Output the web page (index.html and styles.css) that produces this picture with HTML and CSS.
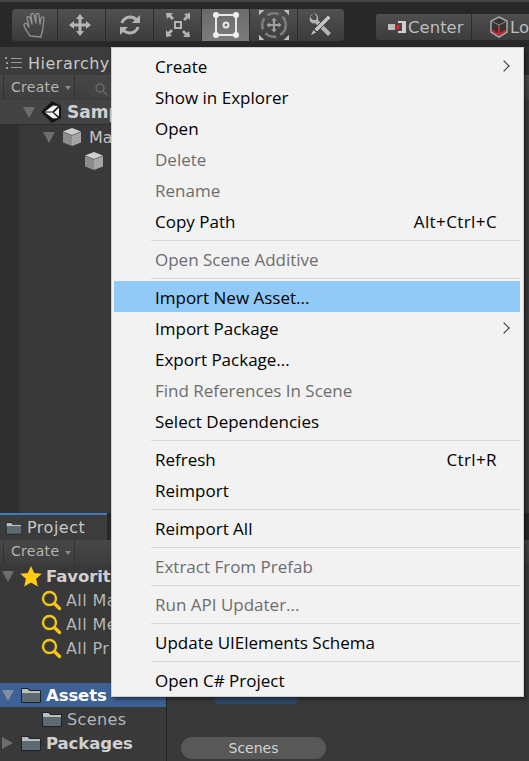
FILE: index.html
```html
<!DOCTYPE html>
<html lang="en">
<head>
  <meta charset="UTF-8" />
  <title>Unity Editor - Project context menu</title>
  <link rel="stylesheet" href="styles.css">
</head>
<body>
  <svg class="defs" width="0" height="0">
    <defs>
      <symbol id="folder" viewBox="0 0 22 18">
        <path d="M1 16V3q0-1 1-1h6l2 2h10q1 0 1 1v11q0 1-1 1H2q-1 0-1-1z" fill="#1d2226"/>
        <path d="M2 7h18v9H2z" fill="#5d6a72"/>
        <path d="M2 3h5.500l2 2H20v2H2z" fill="#b9bdbf"/>
      </symbol>
      <symbol id="search" viewBox="0 0 21 21">
        <circle cx="8.500" cy="8.500" r="6.500" fill="none" stroke="#f5c518" stroke-width="2.400"/>
        <path d="M13.500 13.500l5 5" stroke="#f5c518" stroke-width="3.400" stroke-linecap="round"/>
      </symbol>
      <symbol id="cube" viewBox="0 0 20 20">
        <path d="M10 1l9 3.500L10 8 1 4.500z" fill="#cfcfcf"/>
        <path d="M1 5l9 3.500V19l-9-3.500z" fill="#8c8c8c"/>
        <path d="M19 5l-9 3.500V19l9-3.500z" fill="#a5a5a5"/>
      </symbol>
    </defs>
  </svg>

  <header class="toolbar">
    <div class="tools">
      <button class="tool tool-end">
        <svg width="26" height="28" viewBox="0 0 26 28" fill="none" stroke="#8e8e8e" stroke-width="1.400" stroke-linejoin="round" stroke-linecap="round">
          <path d="M8 25C6 21 2 17 2 14c0-2 2-2 3-1l2 3L5 7c0-2 2-2 3 0l2 6-1-9c0-2 3-2 3 0l2 8 0-8c0-2 3-2 3 0l1 9 1-6c1-2 3-1 3 0l-1 9c0 4-2 7-2 10z"/>
        </svg>
      </button>
      <button class="tool">
        <svg class="move-icon" width="24" height="24" viewBox="0 0 24 24" fill="#b4b4b4">
          <path d="M12 1l4 5h-2.500v4.500H18V8l5 4-5 4v-2.500h-4.500V18H16l-4 5-4-5h2.500v-4.500H6V16l-5-4 5-4v2.500h4.500V6H8z"/>
        </svg>
      </button>
      <button class="tool">
        <svg width="24" height="24" viewBox="0 0 24 24" fill="none" stroke="#b4b4b4" stroke-width="3">
          <path d="M4 10c1-4 5-6 8-6 3 0 5 1 7 3"/>
          <path d="M20 14c-1 4-5 6-8 6-3 0-5-1-7-3"/>
          <path d="M22 2v8h-8z" fill="#b4b4b4" stroke="none"/>
          <path d="M2 22v-8h8z" fill="#b4b4b4" stroke="none"/>
        </svg>
      </button>
      <button class="tool">
        <svg width="26" height="26" viewBox="0 0 26 26" fill="#b4b4b4">
          <path d="M9 9h8v8H9zm2 2v4h4v-4z" fill-rule="evenodd"/>
          <path d="M1 1h7L6 3l3 3-2 2-3-3-2 2zM25 1v7l-2-2-3 3-2-2 3-3-2-2zM1 25v-7l2 2 3-3 2 2-3 3 2 2zM25 25h-7l2-2-3-3 2-2 3 3 2-2z"/>
        </svg>
      </button>
      <button class="tool tool-on">
        <svg width="30" height="30" viewBox="0 0 30 30">
          <path d="M5 5h20v20H5z" fill="none" stroke="#e8e8e8" stroke-width="2"/>
          <circle cx="5" cy="5" r="3" fill="#f0f0f0"/>
          <circle cx="25" cy="5" r="3" fill="#f0f0f0"/>
          <circle cx="5" cy="25" r="3" fill="#f0f0f0"/>
          <circle cx="25" cy="25" r="3" fill="#f0f0f0"/>
          <circle cx="15" cy="15" r="2.500" fill="none" stroke="#e8e8e8" stroke-width="2"/>
        </svg>
      </button>
      <button class="tool">
        <svg width="30" height="30" viewBox="0 0 28 28" fill="none">
          <path d="M0 0h5L0 5zM28 0v5l-5-5zM0 28v-5l5 5zM28 28h-5l5-5z" fill="#bdbdbd"/>
          <circle cx="14" cy="14" r="11" stroke="#7c7c7c" stroke-width="2.500" stroke-dasharray="11 4"/>
          <path d="M14 7l2.500 3h-1.500v3h3v-1.500l3 2.500-3 2.500V15h-3v3h1.500L14 21l-2.500-3H13v-3h-3v1.500L7 14l3-2.500V13h3v-3h-1.500z" fill="#a0a0a0"/>
        </svg>
      </button>
      <button class="tool tool-end">
        <svg width="24" height="24" viewBox="0 0 24 24">
          <path d="M4 1C1 2 0 5 1 8c1 2 3 3 5 2l13 13 3-3L9 7c1-3-1-6-4-7l3 4-1 3-3 0-3-3z" fill="#b4b4b4"/>
          <path d="M19 2l3 3L8 19l-3-3z" fill="#c4c4c4" stroke="#454545" stroke-width="1"/>
          <path d="M4.500 17l2.500 2.500L2 22z" fill="#c4c4c4"/>
        </svg>
      </button>
    </div>
    <div class="pivot">
      <button class="pivot-btn pivot-center">
        <svg width="20" height="14" viewBox="0 0 20 14">
          <path d="M1 4h7v6H1z" fill="#bdbdbd"/>
          <path d="M11 1h8v12h-8z" fill="#cfcfcf"/>
          <path d="M8 3h7v8H8z" fill="#454545"/>
          <circle cx="10.500" cy="7" r="2.600" fill="#c9232f"/>
        </svg>
        Center
      </button>
      <button class="pivot-btn pivot-local">
        <svg width="20" height="24" viewBox="0 0 20 24" fill="none">
          <path d="M10 2l8 4v11l-8 5-8-5V6z" stroke="#a8a8a8" stroke-width="1.500" fill="#343434"/>
          <path d="M2 6l8 4 8-4M10 10v4" stroke="#8a8a8a" stroke-width="1"/>
          <path d="M10 11v9M4 15c2 5 10 5 12 0" stroke="#d6222d" stroke-width="2"/>
        </svg>
        Local
      </button>
    </div>
  </header>

  <main class="editor">
    <section class="upper">
      <div class="hierarchy">
        <div class="tab-row">
          <div class="tab hier-tab">
            <svg width="18" height="12" viewBox="0 0 18 12" fill="#9c9c9c">
              <path d="M0 0h2v2H0zM1 5h2v2H1zM1 10h2v2H1z"/>
              <path d="M6 1h11v1H6zM6 5h11v1H6zM6 10h11v1H6z"/>
            </svg>
            Hierarchy
          </div>
        </div>
        <div class="panel-bar">
          <span class="create">Create <i class="drop"></i></span>
          <span class="searchbox">
            <svg width="14" height="14" viewBox="0 0 14 14" fill="none" stroke="#6b6b6b" stroke-width="1.500"><circle cx="6" cy="6" r="4"/><path d="M9 9l4 4"/></svg>
          </span>
        </div>
        <div class="scene-row">
          <i class="arrow-down"></i>
          <svg class="unity" width="21" height="22" viewBox="0 0 21 22">
            <path d="M0 11L11 0l9 5v12l-9 5z" fill="#141414"/>
            <path d="M4 10.500l8-6 5 .5-5.500 5.500zM13 11.500L18 6.500v9zM4 11.500h7.500l5.500 5.500-5 .5z" fill="#f2f2f2"/>
          </svg>
          <b>Samp</b>
        </div>
        <div class="tree">
          <div class="tree-row row-camera">
            <i class="arrow-down"></i>
            <svg width="20" height="20"><use href="#cube"/></svg>
            <span>Ma</span>
          </div>
          <div class="tree-row row-light">
            <svg width="20" height="20"><use href="#cube"/></svg>
          </div>
        </div>
      </div>
      <div class="scene-side">
        <div class="side-tab"></div>
        <div class="side-bar"></div>
      </div>
    </section>

    <section class="lower">
      <div class="tab-row project-tabs">
        <div class="tab project-tab">
          <svg width="18" height="16" viewBox="0 0 22 18"><use href="#folder"/></svg>
          Project
        </div>
      </div>
      <div class="panel-bar project-bar">
        <span class="create">Create <i class="drop"></i></span>
      </div>
      <div class="project-body">
        <nav class="sidebar">
          <div class="p-row bold">
            <i class="arrow-down"></i>
            <svg width="22" height="21" viewBox="0 0 22 21"><path d="M11 0l3.200 7 7.600.8-5.700 5 1.700 7.600L11 16.500l-6.800 3.900 1.700-7.600L.2 7.800 7.800 7z" fill="#ffcc11"/></svg>
            Favorit
          </div>
          <div class="p-row sub"><svg width="21" height="21"><use href="#search"/></svg>All Ma</div>
          <div class="p-row sub"><svg width="21" height="21"><use href="#search"/></svg>All Me</div>
          <div class="p-row sub"><svg width="21" height="21"><use href="#search"/></svg>All Pr</div>
          <div class="p-gap"></div>
          <div class="p-row bold selected">
            <i class="arrow-down arrow-sel"></i>
            <svg width="22" height="18"><use href="#folder"/></svg>
            Assets
          </div>
          <div class="p-row sub"><svg width="22" height="18"><use href="#folder"/></svg>Scenes</div>
          <div class="p-row bold">
            <i class="arrow-right"></i>
            <svg width="22" height="18"><use href="#folder"/></svg>
            Packages
          </div>
        </nav>
        <div class="files">
          <div class="chip"></div>
          <div class="pill">Scenes</div>
        </div>
      </div>
    </section>
  </main>

  <ul class="menu">
    <li class="item">Create<i class="chev"></i></li>
    <li class="item">Show in Explorer</li>
    <li class="item">Open</li>
    <li class="item off">Delete</li>
    <li class="item off">Rename</li>
    <li class="item">Copy Path<kbd>Alt+Ctrl+C</kbd></li>
    <li class="sep"></li>
    <li class="item off">Open Scene Additive</li>
    <li class="sep"></li>
    <li class="item hot">Import New Asset...</li>
    <li class="item">Import Package<i class="chev"></i></li>
    <li class="item">Export Package...</li>
    <li class="item off">Find References In Scene</li>
    <li class="item">Select Dependencies</li>
    <li class="sep"></li>
    <li class="item">Refresh<kbd>Ctrl+R</kbd></li>
    <li class="item">Reimport</li>
    <li class="sep"></li>
    <li class="item">Reimport All</li>
    <li class="sep"></li>
    <li class="item off">Extract From Prefab</li>
    <li class="sep"></li>
    <li class="item off">Run API Updater...</li>
    <li class="sep"></li>
    <li class="item">Update UIElements Schema</li>
    <li class="sep"></li>
    <li class="item">Open C# Project</li>
  </ul>
</body>
</html>
```

FILE: styles.css
```css
* {
  box-sizing: border-box;
}
html, body {
  margin: 0;
  height: 100%;
}
body {
  width: 529px;
  height: 761px;
  overflow: hidden;
  position: relative;
  background: #2a2a2a;
  font-family: "DejaVu Sans", sans-serif;
  color: #c4c4c4;
}
.defs {
  position: absolute;
}
svg {
  flex-shrink: 0;
}
i {
  display: block;
  font-style: normal;
}

/* top toolbar */
.toolbar {
  height: 47px;
  background: #282828;
  border-top: 2px solid #444;
  display: flex;
  white-space: nowrap;
  padding: 7px 0 0 12px;
  overflow: hidden;
}
.tools {
  display: flex;
  width: 332px;
  height: 32px;
  border-radius: 4px;
  overflow: hidden;
  flex-shrink: 0;
}
.tool {
  width: 48px;
  padding: 0;
  display: flex;
  align-items: center;
  justify-content: center;
  background: linear-gradient(#505050, #3c3c3c);
  border: 0;
  border-right: 1px solid #2c2c2c;
}
.tool-end {
  width: 46px;
}
.tool:last-child {
  border-right: 0;
}
.tool-on {
  background: linear-gradient(#6a6a6a, #7c7c7c);
}
.move-icon {
  margin-right: 3px;
}
.pivot {
  display: flex;
  margin: 5px 0 0 32px;
  height: 26px;
  flex-shrink: 0;
}
.pivot-btn {
  display: flex;
  align-items: center;
  gap: 1px;
  padding: 0 0 0 11px;
  width: 120px;
  background: linear-gradient(#4e4e4e, #3c3c3c);
  border: 0;
  border-radius: 0 3px 3px 0;
  color: #bcbcbc;
  font: 16.500px "DejaVu Sans", sans-serif;
}
.pivot-center {
  width: 96px;
  border-radius: 3px 0 0 3px;
  border-right: 1px solid #2c2c2c;
}
.pivot-local {
  padding-left: 17px;
}

/* upper half */
.editor {
  height: 714px;
  display: flex;
  flex-direction: column;
}
.upper {
  height: 466px;
  display: flex;
}
.hierarchy {
  width: 300px;
  background: #393939;
  display: flex;
  flex-direction: column;
}
.tab-row {
  height: 28px;
  background: #2b2b2b;
  display: flex;
  flex-shrink: 0;
}
.tab {
  display: flex;
  align-items: center;
  gap: 5px;
  font-size: 16px;
  color: #c8c8c8;
  letter-spacing: .5px;
}
.hier-tab {
  width: 200px;
  padding: 4px 0 0 5px;
  background: #3c3c3c;
}
.panel-bar {
  height: 25px;
  display: flex;
  align-items: center;
  background: linear-gradient(#474747, #3e3e3e);
  padding-left: 3px;
  flex-shrink: 0;
}
.create {
  display: flex;
  align-items: center;
  height: 100%;
  width: 72px;
  gap: 6px;
  padding: 0 0 2px 7px;
  font-size: 14px;
  letter-spacing: .3px;
  color: #b4b4b4;
  border-left: 1px solid #333;
  border-right: 1px solid #333;
}
.drop {
  width: 0;
  height: 0;
  margin-top: 3px;
  border: 3.500px solid transparent;
  border-top: 4px solid #8a8a8a;
  border-bottom: 0;
}
.searchbox {
  margin-left: 12px;
  width: 120px;
  height: 18px;
  padding: 2px 0 0 7px;
  border-radius: 9px;
  background: #444;
}
.scene-row {
  height: 25px;
  display: flex;
  align-items: center;
  padding-left: 23px;
  background: #434343;
  border-bottom: 1px solid #2e2e2e;
  font-size: 17px;
  color: #d0d0d0;
  flex-shrink: 0;
  white-space: nowrap;
}
.unity {
  margin: 0 5px 0 6px;
}
.arrow-down {
  flex-shrink: 0;
  width: 0;
  height: 0;
  border: 6px solid transparent;
  border-top: 11px solid #6d6d6d;
  border-bottom: 0;
}
.arrow-sel {
  border-top-color: #7f8ea5;
}
.arrow-right {
  flex-shrink: 0;
  width: 0;
  height: 0;
  border: 6px solid transparent;
  border-left: 11px solid #6d6d6d;
  border-right: 0;
  margin-right: 2px;
}
.tree {
  flex: 1;
  border-left: 19px solid #2f2f2f;
  font-size: 16px;
}
.tree-row {
  height: 24px;
  display: flex;
  align-items: center;
  gap: 7px;
  white-space: nowrap;
}
.row-camera {
  padding-left: 24px;
}
.row-light {
  padding-left: 65px;
}
.scene-side {
  flex: 1;
  background: #3a3a3a;
}
.side-tab {
  height: 28px;
  background: #2f2f2f;
}
.side-bar {
  height: 25px;
  background: linear-gradient(#4c4c4c, #414141);
}

/* project panel */
.lower {
  flex: 1;
  display: flex;
  flex-direction: column;
}
.project-tabs {
  height: 27px;
  background: #282828;
}
.project-tab {
  width: 107px;
  padding-left: 5px;
  gap: 4px;
  background: #3c3c3c;
  border-top: 2px solid #3d7ac4;
}
.project-bar {
  height: 24px;
}
.project-body {
  flex: 1;
  display: flex;
  background: #393939;
}
.sidebar {
  width: 167px;
  border-right: 1px solid #222;
  white-space: nowrap;
  overflow: hidden;
  flex-shrink: 0;
}
.p-row {
  height: 24px;
  display: flex;
  align-items: center;
  gap: 4px;
  font-size: 16px;
  padding-left: 2px;
  letter-spacing: .4px;
}
.p-row.sub {
  padding-left: 41px;
  gap: 4px;
  color: #b6b6b6;
}
.bold {
  font-weight: bold;
  font-size: 16.500px;
  color: #d0d0d0;
  gap: 5px;
  letter-spacing: -.1px;
}
.bold .arrow-down {
  margin-right: 1px;
}
.bold svg {
  margin-right: -1px;
}
.selected {
  background: #3d6095;
  color: #fff;
}
.p-gap {
  height: 23px;
}
.files {
  flex: 1;
}
.chip {
  width: 84px;
  height: 21px;
  margin: 119px 0 0 47px;
  border-radius: 0 0 5px 5px;
  background: #2f4865;
}
.pill {
  width: 145px;
  height: 22px;
  margin: 33px 0 0 14px;
  border-radius: 11px;
  background: #585858;
  color: #d4d4d4;
  font-size: 14px;
  line-height: 22px;
  text-align: center;
}

/* context menu */
.menu {
  position: absolute;
  left: 111px;
  top: 47px;
  width: 413px;
  height: 650px;
  margin: 0;
  padding: 3px 3px 3px 2px;
  list-style: none;
  background: #f2f2f2;
  border: 1px solid #cfcfcf;
  box-shadow: 2px 2px 4px rgba(0, 0, 0, .5);
  font-family: "Open Sans", sans-serif;
  font-size: 17px;
  color: #000;
}
.item {
  height: 31px;
  display: flex;
  align-items: center;
  padding: 0 15px 0 41px;
  white-space: nowrap;
  position: relative;
}
.off {
  color: #6d6d6d;
}
.hot {
  margin: -1px 0 1px;
  padding-top: 2px;
  background: #91c9f7;
}
kbd {
  margin-left: auto;
  padding-right: 8px;
  font: inherit;
  letter-spacing: .4px;
}
.chev {
  position: absolute;
  right: 12px;
  top: 11px;
  width: 8px;
  height: 8px;
  border-top: 1.300px solid #333;
  border-right: 1.300px solid #333;
  transform: rotate(45deg);
}
.sep {
  height: 1px;
  margin: 3px 0 3px 37px;
  background: #d7d7d7;
}
```
